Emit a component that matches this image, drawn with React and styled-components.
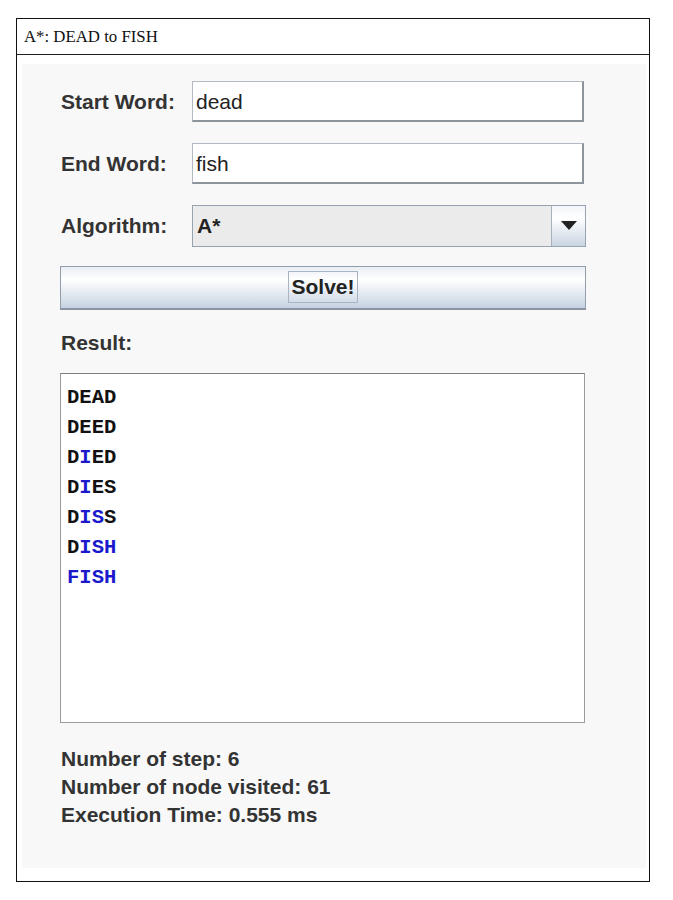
import React from 'react'
import styled, { createGlobalStyle } from 'styled-components'

const GlobalStyle = createGlobalStyle`
  html, body {
    margin: 0;
    padding: 0;
    background: #ffffff;
  }
`

const Frame = styled.div`
  box-sizing: border-box;
  margin: 18px 0 0 16px;
  width: 634px;
  height: 864px;
  border: 1px solid #111;
  display: flex;
  flex-direction: column;
  background: #fff;
`

const TitleBar = styled.div`
  box-sizing: border-box;
  height: 36px;
  border-bottom: 1px solid #222;
  padding-left: 7px;
  display: flex;
  align-items: center;
  font-family: "Liberation Serif", "Times New Roman", serif;
  font-size: 16.8px;
  color: #111;
`

const Panel = styled.div`
  flex: 1;
  margin: 9px 3px 13px 5px;
  padding: 17px 0 0 38px;
  background: #f8f8f8;
  display: flex;
  flex-direction: column;
  font-family: "Liberation Sans", Arial, sans-serif;
  color: #333;
`

const Form = styled.div`
  display: grid;
  grid-template-columns: 132px 394px;
  grid-auto-rows: 41px;
  row-gap: 21px;
  align-items: center;
`

const Label = styled.div`
  font-size: 21px;
  font-weight: bold;
  padding: 1px 0 0 1px;
`

const TextField = styled.div`
  box-sizing: border-box;
  width: 392px;
  height: 41px;
  background: #fff;
  border: 1px solid #b4bac1;
  border-right: 2px solid #8d949c;
  border-bottom: 2px solid #8d949c;
  display: flex;
  align-items: center;
  padding: 2px 0 0 3px;
  font-size: 21px;
  color: #222;
`

const Combo = styled.div`
  box-sizing: border-box;
  height: 42px;
  display: flex;
  border: 1px solid #97a3b1;
  background: #ebebeb;
`

const ComboValue = styled.div`
  flex: 1;
  display: flex;
  align-items: center;
  padding-left: 4px;
  font-size: 21px;
  font-weight: bold;
  color: #222;
  border-right: 1px solid #a7b1bd;
`

const ArrowButton = styled.div`
  width: 33px;
  display: flex;
  align-items: center;
  justify-content: center;
  background: linear-gradient(#f2f5f9, #ffffff 30%, #dde4ee 75%, #c9d4e2);
`

const SolveButton = styled.div`
  box-sizing: border-box;
  grid-column: 1 / span 2;
  width: 526px;
  height: 44px;
  border: 1px solid #939eac;
  border-bottom: 2px solid #8a94a2;
  background: linear-gradient(#e9eef5, #ffffff 30%, #dfe6ef 70%, #c6d2e1);
  display: flex;
  align-items: center;
  justify-content: center;
`

const ButtonText = styled.span`
  font-size: 21px;
  font-weight: bold;
  color: #222;
  padding: 3px 2px;
  border: 1px solid #a9b4c3;
`

const SectionLabel = styled(Label)`
  margin-top: 22px;
  line-height: 24px;
`

const ResultArea = styled.div`
  box-sizing: border-box;
  margin-top: 18px;
  width: 525px;
  height: 350px;
  background: #fff;
  border: 1px solid #9b9b9b;
  border-top-color: #7e7e7e;
  padding: 9px 0 0 6px;
  font-family: "Liberation Mono", "Courier New", monospace;
  font-weight: bold;
  font-size: 20.5px;
  line-height: 30px;
  color: #111;
`

const Letter = styled.span`
  color: ${props => (props.changed ? '#1a1acc' : '#111')};
`

const Stats = styled.div`
  margin-top: 22px;
  font-size: 21px;
  font-weight: bold;
  line-height: 28px;
  padding-left: 1px;
`

const path = [
  { word: 'DEAD', changed: [] },
  { word: 'DEED', changed: [] },
  { word: 'DIED', changed: [1] },
  { word: 'DIES', changed: [1] },
  { word: 'DISS', changed: [1, 2] },
  { word: 'DISH', changed: [1, 2, 3] },
  { word: 'FISH', changed: [0, 1, 2, 3] },
]

export default function App() {
  return (
    <>
      <GlobalStyle />
      <Frame>
        <TitleBar>A*: DEAD to FISH</TitleBar>
        <Panel>
          <Form>
            <Label>Start Word:</Label>
            <TextField>dead</TextField>
            <Label>End Word:</Label>
            <TextField>fish</TextField>
            <Label>Algorithm:</Label>
            <Combo>
              <ComboValue>A*</ComboValue>
              <ArrowButton>
                <svg width="16" height="9" viewBox="0 0 16 9">
                  <path d="M0 0 H16 L8 9 Z" fill="#222" />
                </svg>
              </ArrowButton>
            </Combo>
            <SolveButton>
              <ButtonText>Solve!</ButtonText>
            </SolveButton>
          </Form>
          <SectionLabel>Result:</SectionLabel>
          <ResultArea>
            {path.map(step => (
              <div key={step.word}>
                {step.word.split('').map((ch, i) => (
                  <Letter key={i} changed={step.changed.includes(i)}>
                    {ch}
                  </Letter>
                ))}
              </div>
            ))}
          </ResultArea>
          <Stats>
            <div>Number of step: 6</div>
            <div>Number of node visited: 61</div>
            <div>Execution Time: 0.555 ms</div>
          </Stats>
        </Panel>
      </Frame>
    </>
  )
}
